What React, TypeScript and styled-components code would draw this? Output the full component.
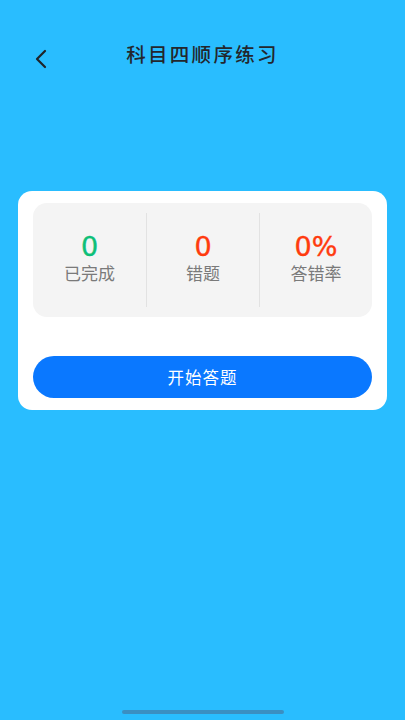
import styled, { createGlobalStyle } from "styled-components";

const GlobalStyle = createGlobalStyle`
  html, body {
    margin: 0;
    padding: 0;
    background: #29bdff;
  }
  body {
    font-family: "Noto Sans", "Noto Sans CJK SC", sans-serif;
  }
`;

const Page = styled.div`
  width: 405px;
  height: 720px;
  display: flex;
  flex-direction: column;
  background: #29bdff;
  overflow: hidden;
`;

const Header = styled.div`
  display: grid;
  grid-template-columns: 1fr auto 1fr;
  align-items: center;
  margin-top: 33px;
  height: 40px;
`;

const BackButton = styled.button`
  justify-self: start;
  margin: 12px 0 0 31px;
  padding: 0;
  width: 20px;
  height: 20px;
  border: none;
  background: transparent;
  display: flex;
  align-items: center;
  justify-content: center;
`;

const Title = styled.h1`
  margin: 0;
  font-size: 19.5px;
  font-weight: 500;
  letter-spacing: 2.3px;
  color: #23272d;
  font-family: "Noto Sans CJK SC", sans-serif;
`;

const Card = styled.div`
  margin: 118px 18px 0;
  background: #fff;
  border-radius: 14px;
  padding: 12px 15px;
  display: flex;
  flex-direction: column;
  gap: 39px;
`;

const Stats = styled.div`
  height: 114px;
  background: #f4f4f4;
  border-radius: 14px;
  display: grid;
  grid-template-columns: repeat(3, 1fr);
  align-items: center;
`;

const Stat = styled.div<{ $divider?: boolean }>`
  height: 94px;
  box-sizing: border-box;
  padding-bottom: 6px;
  display: flex;
  flex-direction: column;
  align-items: center;
  justify-content: center;
  border-left: ${(p) => (p.$divider ? "1.5px solid #e2e2e2" : "none")};
`;

const Value = styled.div<{ $color: string }>`
  font-family: "DejaVu Sans", sans-serif;
  font-size: 27px;
  line-height: 31px;
  font-weight: 400;
  color: ${(p) => p.$color};
  -webkit-text-stroke: 0.4px ${(p) => p.$color};
`;

const Label = styled.div`
  font-family: "Noto Sans CJK SC", sans-serif;
  font-size: 17px;
  line-height: 22px;
  color: #7a7a7a;
`;

const StartButton = styled.button`
  height: 42px;
  border: none;
  border-radius: 21px;
  background: #0a78ff;
  color: #fff;
  font-family: "Noto Sans CJK SC", sans-serif;
  font-size: 16.5px;
  letter-spacing: 1px;
`;

const Spacer = styled.div`
  flex: 1;
`;

const HomeIndicator = styled.div`
  align-self: center;
  width: 162px;
  height: 4px;
  border-radius: 2px;
  background: #3a8fc2;
  margin-bottom: 6px;
`;

const stats = [
  { value: "0", label: "已完成", color: "#0dbf78" },
  { value: "0", label: "错题", color: "#ff3b0e" },
  { value: "0%", label: "答错率", color: "#ff3b0e" },
];

export default function App() {
  return (
    <Page>
      <GlobalStyle />
      <Header>
        <BackButton aria-label="返回">
          <svg width="16" height="20" viewBox="0 0 16 20">
            <path d="M12 2 L4 10 L12 18" fill="none" stroke="#1f2329" strokeWidth="2.2" strokeLinecap="round" strokeLinejoin="round" />
          </svg>
        </BackButton>
        <Title>科目四顺序练习</Title>
        <div />
      </Header>
      <Card>
        <Stats>
          {stats.map((s, i) => (
            <Stat key={s.label} $divider={i > 0}>
              <Value $color={s.color}>{s.value}</Value>
              <Label>{s.label}</Label>
            </Stat>
          ))}
        </Stats>
        <StartButton>开始答题</StartButton>
      </Card>
      <Spacer />
      <HomeIndicator />
    </Page>
  );
}
